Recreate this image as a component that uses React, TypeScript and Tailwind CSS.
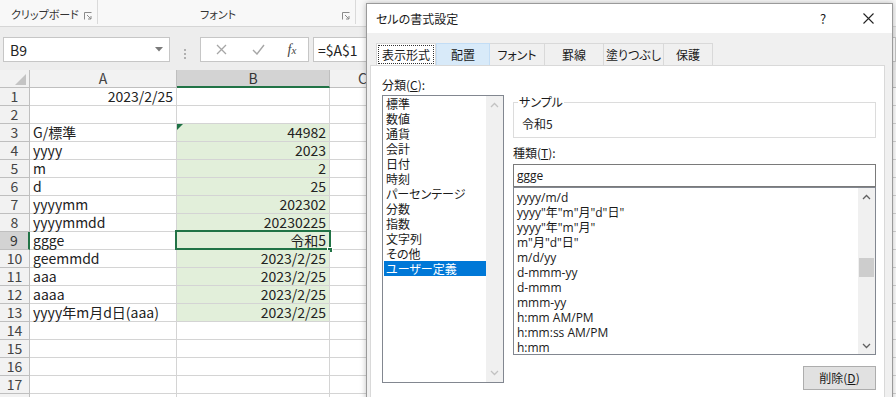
import React from 'react';

type Row = { n: number; a: string; b: string; aRight?: boolean; tint: boolean; active?: boolean; warn?: boolean; hideNum?: boolean };

const rows: Row[] = [
  { n: 1, a: '2023/2/25', b: '', aRight: true, tint: false },
  { n: 2, a: '', b: '', tint: false },
  { n: 3, a: 'G/標準', b: '44982', tint: true, warn: true },
  { n: 4, a: 'yyyy', b: '2023', tint: true },
  { n: 5, a: 'm', b: '2', tint: true },
  { n: 6, a: 'd', b: '25', tint: true },
  { n: 7, a: 'yyyymm', b: '202302', tint: true },
  { n: 8, a: 'yyyymmdd', b: '20230225', tint: true },
  { n: 9, a: 'ggge', b: '令和5', tint: true, active: true },
  { n: 10, a: 'geemmdd', b: '2023/2/25', tint: true },
  { n: 11, a: 'aaa', b: '2023/2/25', tint: true },
  { n: 12, a: 'aaaa', b: '2023/2/25', tint: true },
  { n: 13, a: 'yyyy年m月d日(aaa)', b: '2023/2/25', tint: true },
  { n: 14, a: '', b: '', tint: false },
  { n: 15, a: '', b: '', tint: false },
  { n: 16, a: '', b: '', tint: false },
  { n: 17, a: '', b: '', tint: false },
  { n: 18, a: '', b: '', tint: false, hideNum: true },
];

const categories = ['標準', '数値', '通貨', '会計', '日付', '時刻', 'パーセンテージ', '分数', '指数', '文字列', 'その他', 'ユーザー定義'];

const formats = [
  'yyyy/m/d',
  'yyyy"年"m"月"d"日"',
  'yyyy"年"m"月"',
  'm"月"d"日"',
  'm/d/yy',
  'd-mmm-yy',
  'd-mmm',
  'mmm-yy',
  'h:mm AM/PM',
  'h:mm:ss AM/PM',
  'h:mm',
];

function Chevron({ dir, color }: { dir: 'up' | 'down'; color: string }) {
  return (
    <svg width="9" height="6" viewBox="0 0 9 6">
      <path d={dir === 'up' ? 'M1 5 L4.5 1.5 L8 5' : 'M1 1 L4.5 4.5 L8 1'} fill="none" stroke={color} strokeWidth="1.3" />
    </svg>
  );
}

function Launcher() {
  return (
    <svg width="8" height="8" viewBox="0 0 8 8">
      <path d="M0.5 7.5 V0.5 H7.5" fill="none" stroke="#8a8a8a" strokeWidth="1" />
      <path d="M3 3 L7 7 M4 7 H7 V4" fill="none" stroke="#8a8a8a" strokeWidth="1" />
    </svg>
  );
}

function Ribbon() {
  return (
    <div className="flex h-[27px] bg-[#f8f8f8] border-b border-[#d6d6d6] text-[11px] text-[#333] [font-feature-settings:'palt']">
      <div className="w-[98px] shrink-0 flex items-end justify-between pl-[11px] pr-[5px] pb-[2px] border-r border-[#dadada] mb-[2px]">
        <span className="leading-[15px] whitespace-nowrap">クリップボード</span>
        <span className="mb-[2px]"><Launcher /></span>
      </div>
      <div className="w-[258px] shrink-0 flex items-end pb-[2px] pr-[5px] border-r border-[#dadada] mb-[2px]">
        <span className="leading-[15px] ml-[102px] flex-1 whitespace-nowrap">フォント</span>
        <span className="mb-[2px]"><Launcher /></span>
      </div>
      <div className="flex-1" />
    </div>
  );
}

function FormulaBar() {
  return (
    <div className="flex h-[43px] bg-[#ededed] pt-[10px]">
      <div className="ml-[3px] w-[167px] h-[25px] bg-white border border-[#c6c6c6] flex items-center justify-between pl-[6px] pr-[6px]">
        <span className="text-[14px] leading-[18px] text-[#222]">B9</span>
        <svg width="8" height="5" viewBox="0 0 8 5"><path d="M0 0 H8 L4 4.5 Z" fill="#7a7a7a" /></svg>
      </div>
      <div className="w-[30px] flex flex-col items-center justify-center gap-[2px]">
        <span className="w-[2px] h-[2px] bg-[#b0b0b0]" />
        <span className="w-[2px] h-[2px] bg-[#b0b0b0]" />
        <span className="w-[2px] h-[2px] bg-[#b0b0b0]" />
      </div>
      <div className="w-[109px] h-[25px] bg-white border border-[#c6c6c6] flex items-center">
        <span className="w-[36px] flex justify-center ml-[2px]">
          <svg width="11" height="11" viewBox="0 0 11 11"><path d="M1 1 L10 10 M10 1 L1 10" stroke="#a6a6a6" strokeWidth="1.3" /></svg>
        </span>
        <span className="w-[38px] flex justify-center">
          <svg width="13" height="11" viewBox="0 0 13 11"><path d="M1 6 L5 10 L12 1" fill="none" stroke="#a6a6a6" strokeWidth="1.4" /></svg>
        </span>
        <span className="w-[30px] flex justify-center font-['Liberation_Serif',serif] italic text-[14px] leading-[16px] text-[#444]">
          f<span className="text-[11px]">x</span>
        </span>
      </div>
      <div className="ml-[4px] flex-1 h-[25px] bg-white border border-[#c6c6c6] flex items-center pl-[4px]">
        <span className="text-[14px] leading-[18px] text-[#222]">=$A$1</span>
      </div>
    </div>
  );
}

function Grid() {
  return (
    <div className="text-[14px] text-[#222]">
      <div className="flex h-[18px]">
        <div className="w-[30px] shrink-0 bg-[#f2f2f2] border-r border-b border-[#bfbfbf] flex items-end justify-end pr-[3px] pb-[2px]">
          <svg width="11" height="11" viewBox="0 0 11 11"><path d="M11 0 V11 H0 Z" fill="#c4c4c4" /></svg>
        </div>
        <div className="w-[147px] shrink-0 bg-[#f2f2f2] border-r border-b border-[#bfbfbf] text-center leading-[17px] text-[#444]">A</div>
        <div className="w-[153px] shrink-0 bg-[#d3d3d3] border-r border-r-[#bfbfbf] border-b-2 border-b-[#217346] text-center leading-[16px] text-[#333]">B</div>
        <div className="w-[66px] shrink-0 bg-[#f2f2f2] border-r border-b border-[#bfbfbf] text-center leading-[17px] text-[#444]">C</div>
        <div className="flex-1 bg-[#f2f2f2] border-b border-[#bfbfbf]" />
      </div>
      {rows.map((r) => (
        <div key={r.n} className="flex h-[18px]">
          <div
            className={
              r.active
                ? 'w-[30px] shrink-0 bg-[#d3d3d3] border-r-2 border-r-[#217346] border-b border-b-[#bfbfbf] text-center leading-[17px] text-[#333]'
                : 'w-[30px] shrink-0 bg-[#f2f2f2] border-r border-b border-[#bfbfbf] text-center leading-[17px] text-[#444]'
            }
          >
            {r.hideNum ? '' : r.n}
          </div>
          <div
            className={
              r.aRight
                ? 'w-[147px] shrink-0 border-r border-b border-[#d4d4d4] leading-[17px] px-[3px] text-right whitespace-nowrap'
                : 'w-[147px] shrink-0 border-r border-b border-[#d4d4d4] leading-[17px] px-[3px] text-left whitespace-nowrap'
            }
          >
            {r.a}
          </div>
          <div
            className={
              r.tint
                ? 'relative w-[153px] shrink-0 bg-[#e2efda] border-r border-b border-[#d4d4d4] leading-[17px] px-[3px] text-right whitespace-nowrap'
                : 'relative w-[153px] shrink-0 border-r border-b border-[#d4d4d4] leading-[17px] px-[3px] text-right whitespace-nowrap'
            }
          >
            {r.b}
            {r.warn && (
              <svg className="absolute left-0 top-0" width="6" height="6" viewBox="0 0 6 6"><path d="M0 0 H6 L0 6 Z" fill="#1e7145" /></svg>
            )}
            {r.active && (
              <>
                <div className="absolute -left-[2px] -top-[2px] w-[156px] h-[20px] border-2 border-[#217346]" />
                <div className="absolute left-[150px] top-[15px] w-[6px] h-[6px] bg-[#217346] border border-white" />
              </>
            )}
          </div>
          <div className="w-[66px] shrink-0 border-r border-b border-[#d4d4d4]" />
          <div className="flex-1 border-b border-[#d4d4d4]" />
        </div>
      ))}
    </div>
  );
}

function Tab({ label, w, kind }: { label: string; w: string; kind: 'sel' | 'hover' | 'normal' }) {
  if (kind === 'sel') {
    return (
      <div className={`${w} h-[22px] bg-white border border-b-0 border-[#d9d9d9] flex items-center justify-center p-[1px]`}>
        <div className="w-full h-full border border-dotted border-[#333] flex items-center justify-center leading-[16px]">{label}</div>
      </div>
    );
  }
  if (kind === 'hover') {
    return (
      <div className={`${w} h-[22px] bg-[#d8eaf9] border border-b-0 border-[#c3ddf5] flex items-center justify-center leading-[16px]`}>{label}</div>
    );
  }
  return (
    <div className={`${w} h-[22px] bg-[#f0f0f0] border-t border-r border-[#d9d9d9] flex items-center justify-center leading-[16px]`}>{label}</div>
  );
}

function FormatDialog() {
  return (
    <div className="absolute left-[366px] top-[3px] w-[527px] h-[400px] bg-[#f0f0f0] border border-[#9a9a9a] shadow-[0_0_6px_rgba(0,0,0,0.25)] font-['Noto_Sans_CJK_JP',sans-serif] [font-feature-settings:'palt'] text-[12px] text-[#1a1a1a]">
      <div className="h-[29px] bg-white flex items-center pl-[9px]">
        <span className="flex-1 leading-[16px]">セルの書式設定</span>
        <span className="w-[20px] text-center text-[13px] leading-[16px] mr-[29px]">?</span>
        <span className="w-[12px] flex justify-center mr-[18px]">
          <svg width="11" height="11" viewBox="0 0 11 11"><path d="M0.5 0.5 L10.5 10.5 M10.5 0.5 L0.5 10.5" stroke="#222" strokeWidth="1.1" /></svg>
        </span>
      </div>
      <div className="pt-[10px]">
        <div className="flex pl-[9px]">
          <Tab label="表示形式" w="w-[60px]" kind="sel" />
          <Tab label="配置" w="w-[54px]" kind="hover" />
          <Tab label="フォント" w="w-[55px]" kind="normal" />
          <Tab label="罫線" w="w-[59px]" kind="normal" />
          <Tab label="塗りつぶし" w="w-[60px]" kind="normal" />
          <Tab label="保護" w="w-[49px]" kind="normal" />
        </div>
        <div className="ml-[3px] w-[515px] h-[340px] bg-white border border-[#d9d9d9] flex pl-[11px] pt-[11px]">
          <div className="w-[122px] shrink-0">
            <div className="h-[16px] leading-[16px]">分類(<span className="underline">C</span>):</div>
            <div className="mt-[2px] h-[288px] border border-[#828790] bg-white flex">
              <div className="flex-1 pl-[1px]">
                {categories.map((c) => (
                  <div
                    key={c}
                    className={
                      c === 'ユーザー定義'
                        ? 'h-[15px] leading-[15px] pl-[2px] bg-[#0078d7] text-white whitespace-nowrap'
                        : 'h-[15px] leading-[15px] pl-[2px] whitespace-nowrap'
                    }
                  >
                    {c}
                  </div>
                ))}
              </div>
              <div className="w-[17px] bg-[#f0f0f0] flex flex-col items-center justify-between py-[6px]">
                <Chevron dir="up" color="#c2c2c2" />
                <Chevron dir="down" color="#c2c2c2" />
              </div>
            </div>
          </div>
          <div className="w-[363px] ml-[9px] pt-[17px]">
            <fieldset className="h-[44px] border border-[#dcdcdc] px-[8px]">
              <legend className="ml-[-4px] px-[1px] leading-[16px]">サンプル</legend>
              <div className="leading-[16px] mt-[6px]">令和5</div>
            </fieldset>
            <div className="mt-[7px] h-[16px] leading-[16px]">種類(<span className="underline">T</span>):</div>
            <div className="mt-[3px] h-[23px] border border-[#7a7a7a] bg-white flex items-center pl-[3px] font-['Open_Sans','Noto_Sans_CJK_JP',sans-serif] leading-[16px]">ggge</div>
            <div className="h-[168px] border border-[#828790] bg-white flex font-['Open_Sans','Noto_Sans_CJK_JP',sans-serif]">
              <div className="flex-1 pt-[2px] pl-[3px]">
                {formats.map((f) => (
                  <div key={f} className="h-[15px] leading-[15px] whitespace-nowrap">{f}</div>
                ))}
              </div>
              <div className="w-[17px] bg-[#f0f0f0] flex flex-col">
                <div className="h-[17px] flex items-center justify-center"><Chevron dir="up" color="#606060" /></div>
                <div className="h-[53px]" />
                <div className="mx-[1px] h-[19px] bg-[#cdcdcd]" />
                <div className="flex-1" />
                <div className="h-[17px] flex items-center justify-center"><Chevron dir="down" color="#606060" /></div>
              </div>
            </div>
            <div className="mt-[11px] flex justify-end">
              <div className="w-[73px] h-[24px] bg-[#e1e1e1] border border-[#adadad] flex items-center justify-center leading-[16px]">
                削除(<span className="underline">D</span>)
              </div>
            </div>
          </div>
        </div>
      </div>
    </div>
  );
}

export default function App() {
  return (
    <div className="relative w-[896px] h-[397px] overflow-hidden bg-white font-['Noto_Sans_CJK_JP',sans-serif]">
      <Ribbon />
      <FormulaBar />
      <Grid />
      <FormatDialog />
    </div>
  );
}
